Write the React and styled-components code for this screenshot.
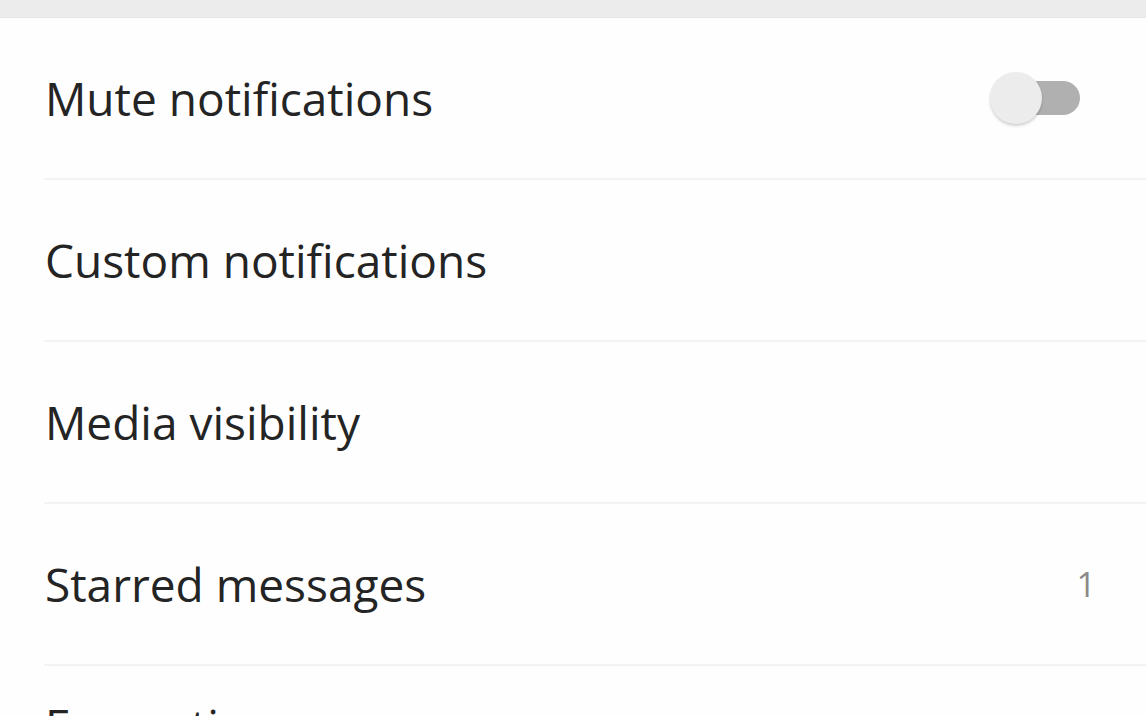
import React from "react";
import styled, { createGlobalStyle } from "styled-components";

const Global = createGlobalStyle`
  html, body { margin: 0; padding: 0; background: #fefefe; }
  body { font-family: "Open Sans", "Noto Sans", sans-serif; overflow: hidden; }
`;

const Page = styled.div`
  width: 1146px;
  height: 716px;
  overflow: hidden;
  background: #fefefe;
  display: flex;
  flex-direction: column;
`;

const TopBar = styled.div`
  height: 17px;
  flex-shrink: 0;
  background: #ececec;
  border-bottom: 1px solid #e4e4e4;
`;

const List = styled.div`
  display: flex;
  flex-direction: column;
  padding-left: 44px;
`;

const Row = styled.div`
  height: 160px;
  flex-shrink: 0;
  display: flex;
  align-items: center;
  justify-content: space-between;
  padding-right: ${(p) => p.$pr || 0}px;
  border-bottom: 2px solid #f3f3f3;
`;

const DetailRow = styled.div`
  flex-shrink: 0;
  display: flex;
  flex-direction: column;
  padding-top: 28px;
  padding-bottom: 28px;
  gap: 6px;
`;

const Label = styled.span`
  font-size: 46px;
  line-height: 62px;
  color: #242424;
  padding-left: 1px;
`;

const Sub = styled.span`
  font-size: 32px;
  line-height: 44px;
  color: #8a8a8a;
  padding-left: 1px;
  padding-right: 60px;
`;

const Count = styled.span`
  font-size: 34px;
  color: #8a8a8a;
`;

const Switch = styled.div`
  position: relative;
  width: 90px;
  height: 56px;
  display: flex;
  align-items: center;
`;

const Track = styled.div`
  position: absolute;
  left: 8px;
  right: 0;
  height: 34px;
  border-radius: 17px;
  background: #b0b0b0;
`;

const Thumb = styled.div`
  position: absolute;
  left: 0;
  width: 52px;
  height: 52px;
  border-radius: 50%;
  background: #ececec;
  box-shadow: 0 2px 3px rgba(0, 0, 0, 0.18);
`;

const items = [
  { label: "Mute notifications", toggle: true },
  { label: "Custom notifications" },
  { label: "Media visibility" },
  { label: "Starred messages", count: "1" },
];

export default function App() {
  return (
    <Page>
      <Global />
      <TopBar />
      <List>
        {items.map((it) => (
          <Row key={it.label} $pr={it.toggle ? 66 : it.count ? 50 : 0}>
            <Label>{it.label}</Label>
            {it.toggle && (
              <Switch>
                <Track />
                <Thumb />
              </Switch>
            )}
            {it.count && <Count>{it.count}</Count>}
          </Row>
        ))}
        <DetailRow>
          <Label>Encryption</Label>
          <Sub>
            Messages to this chat and calls are secured with end-to-end
            encryption. Tap to verify.
          </Sub>
        </DetailRow>
      </List>
    </Page>
  );
}
